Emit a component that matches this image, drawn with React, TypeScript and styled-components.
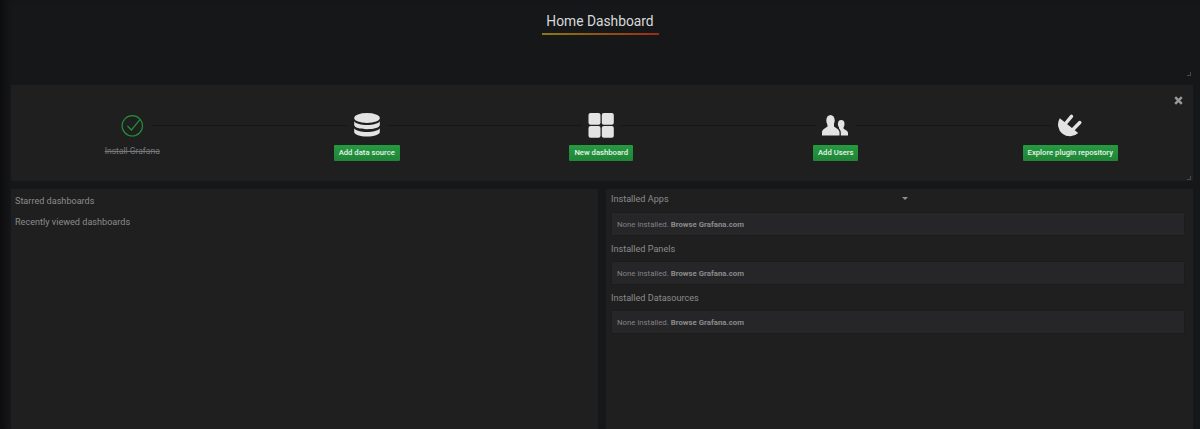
import React from "react";
import styled, { createGlobalStyle } from "styled-components";

const Global = createGlobalStyle`
  html, body { margin: 0; padding: 0; background: #161719; height: 100%; overflow: hidden; }
  * { box-sizing: border-box; }
  #root { height: 100%; }
`;

const Page = styled.div`
  width: 1200px;
  height: 429px;
  overflow: hidden;
  padding: 0 7px 0 11px;
  background: #161719;
  box-shadow: inset 9px 0 6px -4px #0e0e0f;
  font-family: Roboto, "Liberation Sans", sans-serif;
  display: flex;
  flex-direction: column;
  gap: 8px;
`;

const TitlePanel = styled.header`
  height: 77px;
  flex: none;
  position: relative;
  display: flex;
  flex-direction: column;
  align-items: center;
  padding: 12px 4px 0 0;
`;

const Title = styled.h1`
  margin: 0;
  width: 117px;
  height: 22px;
  text-align: center;
  color: #d8d9da;
  font-size: 13.800px;
  font-weight: 400;
  line-height: 18px;
  white-space: nowrap;
  position: relative;
  &::after {
    content: "";
    position: absolute;
    left: 0;
    right: 0;
    bottom: -1px;
    height: 2px;
    background: linear-gradient(90deg, #8a7a14, #9a2c14);
  }
`;

const ResizeHandle = styled.span`
  position: absolute;
  right: 2px;
  bottom: 1px;
  width: 4px;
  height: 4px;
  border-right: 1px solid #4a4a4a;
  border-bottom: 1px solid #4a4a4a;
`;

const StepsPanel = styled.section`
  height: 96px;
  flex: none;
  background: #1f1f20;
  position: relative;
  display: grid;
  grid-template-columns: repeat(5, 234.5px);
  padding: 27px 0 0 4px;
`;

const CloseIcon = styled.svg`
  position: absolute;
  right: 10px;
  top: 11px;
  width: 9px;
  height: 9px;
`;

const Step = styled.div<{ $last?: boolean }>`
  position: relative;
  display: flex;
  flex-direction: column;
  align-items: center;
  &::after {
    content: "";
    display: ${(p) => (p.$last ? "none" : "block")};
    position: absolute;
    top: 12.500px;
    left: calc(50% + 20px);
    width: 195px;
    height: 1.500px;
    background: #161617;
  }
`;

const IconBox = styled.div`
  height: 26px;
  width: 30px;
  display: flex;
  align-items: center;
  justify-content: center;
`;

const StepButton = styled.a`
  margin-top: 7px;
  height: 16px;
  padding: 0 5px;
  display: block;
  border-radius: 1px;
  background: linear-gradient(180deg, #259a41, #1f8537);
  color: #e9f3ea;
  font-size: 7.700px;
  font-weight: 500;
  line-height: 16px;
  white-space: nowrap;
`;

const DoneLabel = styled.span`
  margin-top: 7px;
  height: 16px;
  color: #777879;
  font-size: 8.500px;
  line-height: 12px;
  text-decoration: line-through;
  white-space: nowrap;
`;

const Columns = styled.div`
  flex: 1;
  display: grid;
  grid-template-columns: 587px 587px;
  gap: 8px;
`;

const LeftPanel = styled.section`
  background: #1f1f20;
  padding: 6px 4px;
  display: flex;
  flex-direction: column;
  gap: 9px;
`;

const ListHeading = styled.div`
  color: #8b8b8b;
  font-size: 9.100px;
  line-height: 12px;
`;

const RightPanel = styled.section`
  background: #1f1f20;
  padding: 4px 9px 0 5px;
  position: relative;
`;

const Caret = styled.span`
  position: absolute;
  left: 296px;
  top: 8px;
  width: 0;
  height: 0;
  border-left: 3px solid transparent;
  border-right: 3px solid transparent;
  border-top: 3px solid #909090;
`;

const PluginHeading = styled.div<{ $first?: boolean }>`
  height: 20px;
  padding-top: ${(p) => (p.$first ? 0 : 1)}px;
  color: #8b8b8b;
  font-size: 9.100px;
  line-height: 13px;
`;

const PluginRow = styled.div`
  height: 22px;
  margin: 0 0 7px 1px;
  padding-left: 5px;
  background: #262628;
  box-shadow: 0 0 1px #161616;
  color: #828282;
  font-size: 7.800px;
  line-height: 23px;
  b { font-weight: 700; color: #8a8a8a; }
`;

const icon = "#e3e3e3";

const Check = () => (
  <svg width="24" height="25" viewBox="0 0 24 25" fill="none" stroke="#22903a" strokeWidth="1.1">
    <circle cx="12.300" cy="12.800" r="10.200" />
    <path d="M7.400 13l4 4 9-10.800" strokeWidth="1.200" />
  </svg>
);

const Database = () => (
  <svg width="28" height="26" viewBox="0 0 28 26" fill={icon}>
    <ellipse cx="14" cy="6" rx="12.800" ry="5" />
    <path d="M1.200 9.200C3 11.800 8 13 14 13s11-1.200 12.800-3.800V13c0 2.400-5.700 4.200-12.800 4.200S1.200 15.400 1.200 13z" />
    <path d="M1.200 16.200C3 18.800 8 20 14 20s11-1.200 12.800-3.800V20c0 2.500-5.700 4.600-12.800 4.600S1.200 22.500 1.200 20z" />
  </svg>
);

const Grid = () => (
  <svg width="26" height="26" viewBox="0 0 26 26" fill={icon}>
    <rect x="0.500" y="1" width="12" height="11.700" rx="2" />
    <rect x="13.800" y="1" width="12" height="11.700" rx="2" />
    <rect x="0.500" y="14" width="12" height="11.700" rx="2" />
    <rect x="13.800" y="14" width="12" height="11.700" rx="2" />
  </svg>
);

const Users = () => (
  <svg width="30" height="26" viewBox="822 112 30 26" fill={icon}>
    <ellipse cx="831.500" cy="120.500" rx="4.200" ry="5.500" />
    <path d="M828.500 124v2.500c-1.500 1.500-5.500 2.500-5.500 6v3h17.500v-3c0-3.500-4-4.500-5.500-6V124z" />
    <ellipse cx="842.200" cy="124" rx="3.300" ry="4" />
    <path d="M840 127v1.500c1 .8 1.800 2.400 1.800 4v3H849v-2.500c0-2.500-3-3-4.500-4.500V127z" />
  </svg>
);

const Plug = () => (
  <svg width="26" height="26" viewBox="1057 112 26 26" fill={icon} stroke="none">
    <path d="M1059.800 118.200L1078.200 133A11.900 11.900 0 0 1 1059.800 118.200z" />
    <path d="M1065.500 123.500L1071.500 116.300M1073 129.500L1079.800 122.500" stroke={icon} strokeWidth="3.400" strokeLinecap="round" />
  </svg>
);

const steps = [
  { label: "Add data source", Icon: Database },
  { label: "New dashboard", Icon: Grid },
  { label: "Add Users", Icon: Users },
  { label: "Explore plugin repository", Icon: Plug },
];

const plugins = ["Installed Apps", "Installed Panels", "Installed Datasources"];

export default function App() {
  return (
    <Page>
      <Global />
      <TitlePanel>
        <Title>Home Dashboard</Title>
        <ResizeHandle />
      </TitlePanel>
      <StepsPanel>
        <CloseIcon viewBox="0 0 9 9">
          <path d="M1.200 1.200l6.600 6.600M7.800 1.200L1.200 7.800" stroke="#9a9a9a" strokeWidth="2.400" />
        </CloseIcon>
        <Step>
          <IconBox><Check /></IconBox>
          <DoneLabel>Install Grafana</DoneLabel>
        </Step>
        {steps.map(({ label, Icon }, i) => (
          <Step key={label} $last={i === steps.length - 1}>
            <IconBox><Icon /></IconBox>
            <StepButton>{label}</StepButton>
          </Step>
        ))}
        <ResizeHandle />
      </StepsPanel>
      <Columns>
        <LeftPanel>
          <ListHeading>Starred dashboards</ListHeading>
          <ListHeading>Recently viewed dashboards</ListHeading>
        </LeftPanel>
        <RightPanel>
          <Caret />
          {plugins.map((name, i) => (
            <React.Fragment key={name}>
              <PluginHeading $first={i === 0}>{name}</PluginHeading>
              <PluginRow>None installed. <b>Browse Grafana.com</b></PluginRow>
            </React.Fragment>
          ))}
        </RightPanel>
      </Columns>
    </Page>
  );
}
